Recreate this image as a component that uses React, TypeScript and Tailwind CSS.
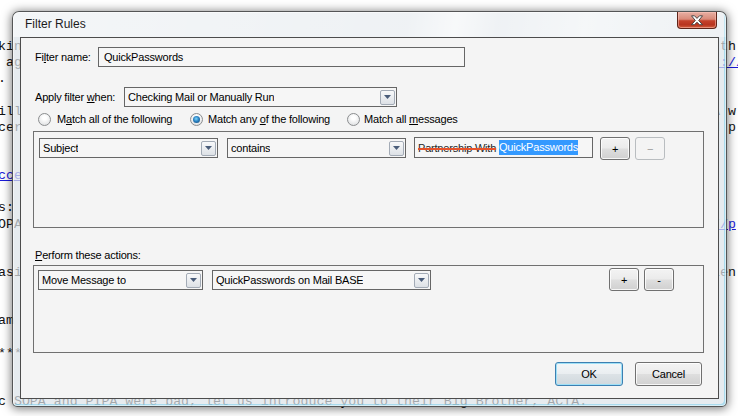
import React from "react";

type Line = { l?: string; r?: string; ll?: boolean; rl?: boolean };

// text of the mail behind the dialog, only the edges show
const lines: Line[] = [
  { l: "kin", r: " th" },
  { l: " ag", r: " ://", rl: true },
  { l: "." },
  {},
  { l: "ill", r: "A w" },
  { l: "cer", r: "d p" },
  {},
  {},
  { l: "cce", ll: true },
  {},
  { l: "s:" },
  { l: "OPA", r: "//p", rl: true },
  {},
  {},
  { l: "asi", r: "ien" },
  {},
  {},
  { l: "am" },
  {},
  { l: "***" },
  {},
  {},
  { l: "c SOPA and PIPA were bad, let us introduce you to their Big Brother, ACTA." },
];

const DropButton = () => (
  <span className="flex h-[15px] w-[15px] shrink-0 items-center justify-center rounded-[2px] border border-[#a3abb6] bg-[linear-gradient(180deg,#f8f9fa,#dde1e6)]">
    <svg width="7" height="4" viewBox="0 0 7 4">
      <path d="M0 0h7L3.5 4z" fill="#4a5d7a" />
    </svg>
  </span>
);

const Select = ({ value, w }: { value: string; w: string }) => (
  <div className={`flex h-[20px] ${w} shrink-0 items-center justify-between border border-[#666] bg-[#f6f6f6] pl-[3px] pr-[1px]`}>
    <span className="truncate">{value}</span>
    <DropButton />
  </div>
);

const Radio = ({ checked }: { checked?: boolean }) => (
  <span className="flex h-[13px] w-[13px] shrink-0 items-center justify-center rounded-full border border-[#8b8d8f] bg-[radial-gradient(circle_at_50%_35%,#ffffff_20%,#d7d9db_100%)]">
    {checked && (
      <span className="h-[7px] w-[7px] rounded-full bg-[radial-gradient(circle_at_45%_40%,#7fd6fb_0%,#2a83c4_45%,#123e6a_100%)]" />
    )}
  </span>
);

const Btn = ({
  children,
  w,
  h,
  disabled,
  def,
}: {
  children: React.ReactNode;
  w: string;
  h: string;
  disabled?: boolean;
  def?: boolean;
}) => {
  let look =
    "border-[#707070] bg-[linear-gradient(180deg,#f3f3f3_0%,#ebebeb_48%,#dedede_52%,#d0d0d0_100%)] shadow-[inset_0_0_0_1px_rgba(255,255,255,0.8)]";
  if (disabled) look = "border-[#b9bdc0] bg-[#f4f4f4] text-[#9a9a9a]";
  if (def)
    look =
      "border-[#3c7fb1] bg-[linear-gradient(180deg,#f3f6f8_0%,#eaeef1_48%,#dce2e6_52%,#d0d8dd_100%)] shadow-[inset_0_0_0_1px_#9ee0f7]";
  return (
    <div className={`flex ${w} ${h} shrink-0 items-center justify-center rounded-[3px] border ${look}`}>
      {children}
    </div>
  );
};

const App = () => {
  return (
    <div className="relative h-[416px] w-[738px] overflow-hidden bg-white">
      {/* mail text behind */}
      <div className="pt-[39px] font-['Liberation_Mono',monospace] text-[13.27px] leading-[16.15px] text-[#111]">
        {lines.map((ln, i) => (
          <div key={i} className="ml-[-2px] flex h-[16.15px] whitespace-pre">
            <span className={`w-[714px] shrink-0 ${ln.ll ? "text-[#1a1adb] underline" : ""}`}>{ln.l ?? ""}</span>
            <span className={ln.rl ? "text-[#1a1adb] underline" : ""}>{ln.r ?? ""}</span>
          </div>
        ))}
      </div>

      {/* dialog window */}
      <div className="absolute left-[12px] top-[11px] flex h-[396px] w-[715px] flex-col rounded-t-[7px] rounded-b-[5px] border border-[rgba(35,35,35,0.75)] bg-[rgba(220,227,233,0.72)] shadow-[0_1px_10px_1px_rgba(0,0,0,0.5),inset_0_0_0_1px_rgba(255,255,255,0.55),inset_-2px_-2px_0_0_rgba(120,205,235,0.55)] font-['Liberation_Sans',Arial,sans-serif]">
        <div className="flex h-[25px] shrink-0 items-start justify-between rounded-t-[6px] bg-[linear-gradient(100deg,rgba(255,255,255,0.55)_0%,rgba(255,255,255,0.35)_55%,rgba(255,255,255,0.7)_62%,rgba(255,255,255,0.35)_68%,rgba(255,255,255,0.6)_80%,rgba(255,255,255,0.3)_100%)]">
          <span className="pl-[12px] pt-[5px] text-[12px] leading-[15px] text-[#1b1b1b]">Filter Rules</span>
          <div className="mr-[9px] flex h-[17px] w-[40px] items-center justify-center rounded-b-[4px] border border-t-0 border-[#5e2419] bg-[linear-gradient(180deg,#e8b0a4_0%,#d98a79_45%,#c4412b_55%,#b8341f_80%,#d4603f_100%)] shadow-[inset_0_0_0_1px_rgba(255,200,190,0.5)]">
            <svg width="14" height="11" viewBox="0 0 14 11">
              <path
                d="M1.5 0.8h3l2.5 2.6 2.5-2.6h3L8.7 5.5l3.8 4.2h-3L7 7.2 4.5 9.7h-3l3.8-4.2z"
                fill="#ffffff"
                stroke="#3a3a3a"
                strokeWidth="0.9"
                strokeLinejoin="round"
              />
            </svg>
          </div>
        </div>

        <div className="mx-[7px] flex h-[362px] shrink-0 flex-col border border-[#4c4c4c] bg-[#f4f4f4] pl-[12px] pr-[14px] pt-[9px] text-[11px] leading-[14px] tracking-[-0.2px] text-black">
          <div className="flex h-[20px] items-center">
            <span className="w-[65px] shrink-0 pl-[2px]">
              Fi<u>l</u>ter name:
            </span>
            <div className="flex h-[20px] w-[367px] items-center border border-[#666] bg-[#f6f6f6] pl-[5px]">
              QuickPasswords
            </div>
          </div>

          <div className="mt-[20px] flex h-[20px] items-center">
            <span className="w-[91px] shrink-0 pl-[2px]">
              Apply filter <u>w</u>hen:
            </span>
            <Select value="Checking Mail or Manually Run" w="w-[273px]" />
          </div>

          <div className="mt-[5px] flex h-[14px] items-center pl-[5px]">
            <div className="flex w-[152px] shrink-0 items-center">
              <Radio />
              <span className="ml-[6px] whitespace-nowrap">
                M<u>a</u>tch all of the following
              </span>
            </div>
            <div className="flex w-[157px] shrink-0 items-center">
              <Radio checked />
              <span className="ml-[5px] whitespace-nowrap">
                Match any <u>o</u>f the following
              </span>
            </div>
            <div className="flex items-center">
              <Radio />
              <span className="ml-[4px] whitespace-nowrap">
                Match all <u>m</u>essages
              </span>
            </div>
          </div>

          <div className="mt-[5px] flex h-[97px] w-[671px] items-start border border-[#707070] pl-[5px] pt-[5px]">
            <div className="mt-[1px]">
              <Select value="Subject" w="w-[179px]" />
            </div>
            <div className="ml-[9px] mt-[1px]">
              <Select value="contains" w="w-[179px]" />
            </div>
            <div className="ml-[8px] flex h-[21px] w-[179px] shrink-0 items-center whitespace-pre border border-[#666] bg-[#f6f6f6] pl-[3px]">
              <span className="text-[#262626] line-through decoration-[#e6522b] decoration-2">Partnership With</span>
              <span> </span>
              <span className="inline-block h-[15px] bg-[#3399ff] leading-[15px] text-white">QuickPasswords</span>
            </div>
            <div className="ml-[7px]">
              <Btn w="w-[30px]" h="h-[23px]">
                +
              </Btn>
            </div>
            <div className="ml-[5px]">
              <Btn w="w-[30px]" h="h-[23px]" disabled>
                −
              </Btn>
            </div>
          </div>

          <div className="mt-[20px] h-[14px] pl-[2px]">
            <u>P</u>erform these actions:
          </div>

          <div className="mt-[3px] flex h-[88px] w-[671px] items-start border border-[#707070] pl-[4px] pt-[2px]">
            <div className="mt-[2px]">
              <Select value="Move Message to" w="w-[165px]" />
            </div>
            <div className="ml-[9px] mt-[2px]">
              <Select value="QuickPasswords on Mail BASE" w="w-[219px]" />
            </div>
            <div className="ml-[178px]">
              <Btn w="w-[30px]" h="h-[23px]">
                +
              </Btn>
            </div>
            <div className="ml-[5px]">
              <Btn w="w-[30px]" h="h-[23px]">
                -
              </Btn>
            </div>
          </div>

          <div className="mr-[2px] mt-[9px] flex justify-end gap-[12px]">
            <Btn w="w-[68px]" h="h-[24px]" def>
              OK
            </Btn>
            <Btn w="w-[67px]" h="h-[24px]">
              Cancel
            </Btn>
          </div>
        </div>
      </div>
    </div>
  );
};

export default App;
